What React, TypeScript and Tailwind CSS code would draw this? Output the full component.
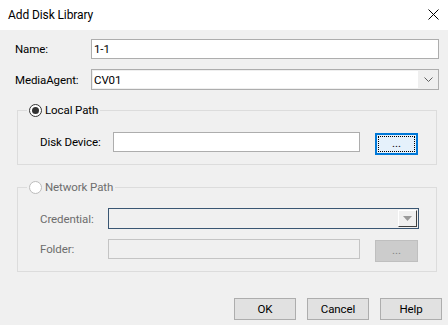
import React from "react"

const font = { fontFamily: 'Roboto, "Noto Sans", sans-serif' }

function Radio({ checked, disabled }: { checked?: boolean; disabled?: boolean }) {
  return (
    <span
      className={`flex h-[13px] w-[13px] items-center justify-center rounded-full border bg-white ${
        disabled ? "border-[#bcbcbc]" : "border-[#333333]"
      }`}
    >
      {checked && <span className="h-[7px] w-[7px] rounded-full bg-[#333333]" />}
    </span>
  )
}

function WinButton({ children, className = "" }: { children: React.ReactNode; className?: string }) {
  return (
    <div
      className={`flex h-[22px] w-[62px] items-center justify-center border border-[#adadad] bg-[#e1e1e1] text-black ${className}`}
    >
      {children}
    </div>
  )
}

export default function App() {
  return (
    <div className="flex h-[325px] w-[448px] flex-col bg-[#f0f0f0] text-[11.5px] leading-[16px] tracking-[-0.1px] text-black" style={font}>
      {/* title bar */}
      <div className="flex h-[30px] items-center justify-between bg-white pl-[8px] pr-[9px]">
        <span className="text-[12px] text-black">Add Disk Library</span>
        <svg width="11" height="11" viewBox="0 0 11 11" className="mt-[-2px]">
          <path d="M0.5 0.5 L10.5 10.5 M10.5 0.5 L0.5 10.5" stroke="#000" strokeWidth="1" />
        </svg>
      </div>

      <div className="flex flex-col pl-[15px]">
        <div className="mt-[9px] flex h-[20px] items-center">
          <span className="w-[76px]">Name:</span>
          <div className="flex h-[20px] w-[348px] items-center border border-[#adadad] bg-white pl-[2px]">1-1</div>
        </div>
        <div className="mt-[10px] flex h-[21px] items-center">
          <span className="w-[76px]">MediaAgent:</span>
          <div className="flex h-[21px] w-[348px] border border-[#adadad] bg-[#efefef]">
            <div className="m-[1px] flex flex-1 items-center bg-white pl-[1px]">CV01</div>
            <div className="flex w-[19px] items-center justify-center">
              <svg width="9" height="5" viewBox="0 0 9 5">
                <path d="M0.5 0.5 L4.5 4.5 L8.5 0.5" stroke="#606060" fill="none" strokeWidth="1" />
              </svg>
            </div>
          </div>
        </div>
      </div>

      {/* Local Path group */}
      <fieldset className="ml-[17px] mt-[12px] h-[63px] w-[420px] border border-[#dcdcdc] pl-[22px]">
        <legend className="ml-[-13px] flex h-[16px] items-center gap-[3px] px-[2px]">
          <Radio checked />
          <span>Local Path</span>
        </legend>
        <div className="mt-[14px] flex items-start">
          <span className="flex h-[20px] w-[73px] items-center">Disk Device:</span>
          <div className="h-[20px] w-[247px] border border-[#adadad] bg-white" />
          <div className="ml-[15px] mt-[1px] flex h-[22px] w-[43px] items-center justify-center border-2 border-[#0078d7] bg-[#e5f1fb] p-[1px]">
            <div className="flex h-full w-full items-center justify-center border border-dotted border-black leading-none">
              ...
            </div>
          </div>
        </div>
      </fieldset>

      {/* Network Path group */}
      <fieldset className="ml-[17px] mt-[14px] h-[93px] w-[420px] border border-[#dcdcdc] pl-[22px]">
        <legend className="ml-[-13px] flex h-[16px] items-center gap-[3px] px-[2px] text-[#6d6d6d]">
          <Radio disabled />
          <span>Network Path</span>
        </legend>
        <div className="mt-[13px] flex h-[21px] items-center">
          <span className="w-[68px] text-[#6d6d6d]">Credential:</span>
          <div className="flex h-[21px] w-[311px] justify-end border border-[#3a5673] bg-[#f0f0f0] p-[1px]">
            <div className="flex w-[19px] items-center justify-center border-b border-l border-r border-t border-b-[#404040] border-l-white border-r-[#404040] border-t-white bg-[#f0f0f0]">
              <svg width="9" height="5" viewBox="0 0 9 5">
                <path d="M0 0 L9 0 L4.5 5 Z" fill="#9a9a9a" />
              </svg>
            </div>
          </div>
        </div>
        <div className="mt-[10px] flex items-start">
          <span className="flex h-[20px] w-[68px] items-center text-[#6d6d6d]">Folder:</span>
          <div className="h-[20px] w-[252px] border border-[#c4c4c4] bg-[#f0f0f0]" />
          <div className="ml-[15px] mt-[1px] flex h-[22px] w-[43px] items-center justify-center border border-[#bfbfbf] bg-[#cccccc] leading-none text-[#838383]">
            ...
          </div>
        </div>
      </fieldset>

      <div className="mt-[26px] flex justify-end gap-[11px] pr-[6px]">
        <WinButton>OK</WinButton>
        <WinButton>Cancel</WinButton>
        <WinButton>Help</WinButton>
      </div>
    </div>
  )
}
